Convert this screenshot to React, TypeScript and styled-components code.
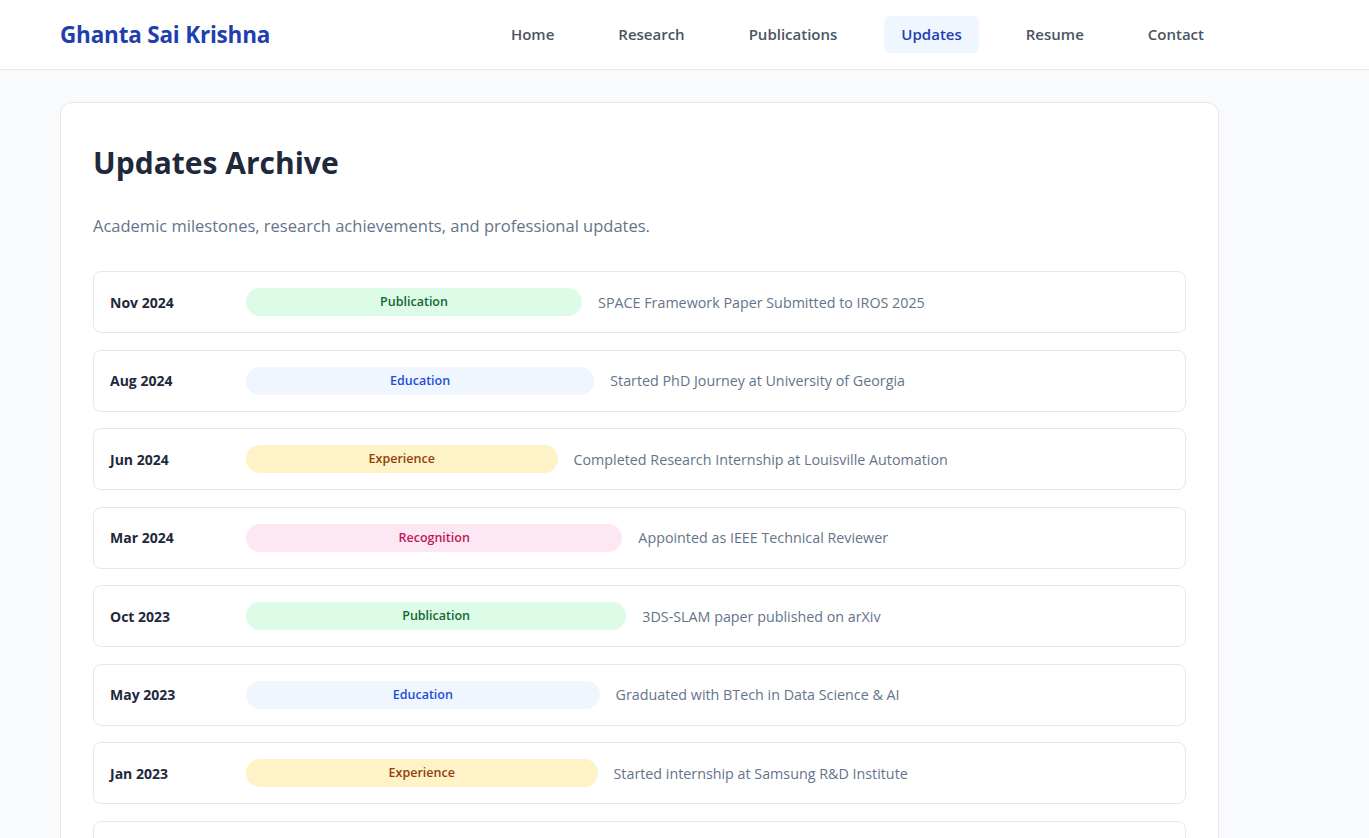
import React from 'react'
import styled, { createGlobalStyle } from 'styled-components'

type Kind = 'Publication' | 'Education' | 'Experience' | 'Recognition'

type Update = {
  date: string
  kind: Kind
  title: string
}

const updates: Update[] = [
  { date: 'Nov 2024', kind: 'Publication', title: 'SPACE Framework Paper Submitted to IROS 2025' },
  { date: 'Aug 2024', kind: 'Education', title: 'Started PhD Journey at University of Georgia' },
  { date: 'Jun 2024', kind: 'Experience', title: 'Completed Research Internship at Louisville Automation' },
  { date: 'Mar 2024', kind: 'Recognition', title: 'Appointed as IEEE Technical Reviewer' },
  { date: 'Oct 2023', kind: 'Publication', title: '3DS-SLAM paper published on arXiv' },
  { date: 'May 2023', kind: 'Education', title: 'Graduated with BTech in Data Science & AI' },
  { date: 'Jan 2023', kind: 'Experience', title: 'Started internship at Samsung R&D Institute' },
  { date: 'Sep 2022', kind: 'Recognition', title: 'Best Paper Award at Student Research Symposium' },
]

const badgeColors: Record<Kind, { bg: string; fg: string }> = {
  Publication: { bg: '#dcfce7', fg: '#166534' },
  Education: { bg: '#eff6ff', fg: '#1d4ed8' },
  Experience: { bg: '#fef3c7', fg: '#92400e' },
  Recognition: { bg: '#fce7f3', fg: '#be185d' },
}

const navItems = ['Home', 'Research', 'Publications', 'Updates', 'Resume', 'Contact']

const GlobalStyle = createGlobalStyle`
  * { box-sizing: border-box; }
  body {
    margin: 0;
    background: #f8fafc;
    font-family: "Open Sans", "Noto Sans", "Liberation Sans", sans-serif;
    color: #1e293b;
  }
`

const Header = styled.header`
  height: 70px;
  background: #ffffff;
  border-bottom: 1px solid #e5e7eb;
`

const HeaderInner = styled.div`
  width: 1161px;
  margin-left: 60px;
  height: 100%;
  display: flex;
  align-items: center;
  justify-content: space-between;
`

const Logo = styled.a`
  font-size: 22.5px;
  font-weight: 700;
  color: #1e40af;
  text-decoration: none;
  letter-spacing: -0.2px;
`

const Nav = styled.nav`
  display: flex;
  gap: 30px;
  margin-top: -1px;
`

const NavLink = styled.a<{ $active?: boolean }>`
  padding: 8px 17px;
  border-radius: 6px;
  font-size: 15px;
  line-height: 21px;
  font-weight: 600;
  text-decoration: none;
  color: ${(p) => (p.$active ? '#1e40af' : '#4b5563')};
  background: ${(p) => (p.$active ? '#eff6ff' : 'transparent')};
`

const Main = styled.main`
  width: 1159px;
  margin-left: 60px;
  padding-top: 32px;
`

const Card = styled.section`
  background: #ffffff;
  border: 1px solid #e5e7eb;
  border-radius: 12px;
  padding: 40px 32px 32px;
`

const Title = styled.h1`
  margin: 0;
  font-size: 30px;
  font-weight: 700;
  line-height: 40px;
  color: #1e293b;
`

const Subtitle = styled.p`
  margin: 31px 0 33px;
  font-size: 16.5px;
  line-height: 24px;
  color: #64748b;
`

const List = styled.ul`
  list-style: none;
  margin: 0;
  padding: 0;
  display: flex;
  flex-direction: column;
  gap: 16.5px;
`

const Row = styled.li`
  display: flex;
  align-items: center;
  gap: 16px;
  padding: 16px;
  border: 1px solid #e2e8f0;
  border-radius: 8px;
`

const DateCell = styled.span`
  width: 120px;
  flex-shrink: 0;
  font-size: 14px;
  font-weight: 700;
  color: #1e293b;
`

const Badge = styled.span<{ $kind: Kind }>`
  flex-grow: 1;
  padding: 4px 12px;
  border-radius: 999px;
  text-align: center;
  font-size: 12.5px;
  font-weight: 600;
  line-height: 20px;
  background: ${(p) => badgeColors[p.$kind].bg};
  color: ${(p) => badgeColors[p.$kind].fg};
`

const UpdateTitle = styled.span`
  flex-grow: 1;
  font-size: 14.3px;
  color: #64748b;
`

export default function App() {
  return (
    <>
      <GlobalStyle />
      <Header>
        <HeaderInner>
          <Logo href="#">Ghanta Sai Krishna</Logo>
          <Nav>
            {navItems.map((item) => (
              <NavLink key={item} href="#" $active={item === 'Updates'}>
                {item}
              </NavLink>
            ))}
          </Nav>
        </HeaderInner>
      </Header>
      <Main>
        <Card>
          <Title>Updates Archive</Title>
          <Subtitle>Academic milestones, research achievements, and professional updates.</Subtitle>
          <List>
            {updates.map((u) => (
              <Row key={u.date + u.title}>
                <DateCell>{u.date}</DateCell>
                <Badge $kind={u.kind}>{u.kind}</Badge>
                <UpdateTitle>{u.title}</UpdateTitle>
              </Row>
            ))}
          </List>
        </Card>
      </Main>
    </>
  )
}
